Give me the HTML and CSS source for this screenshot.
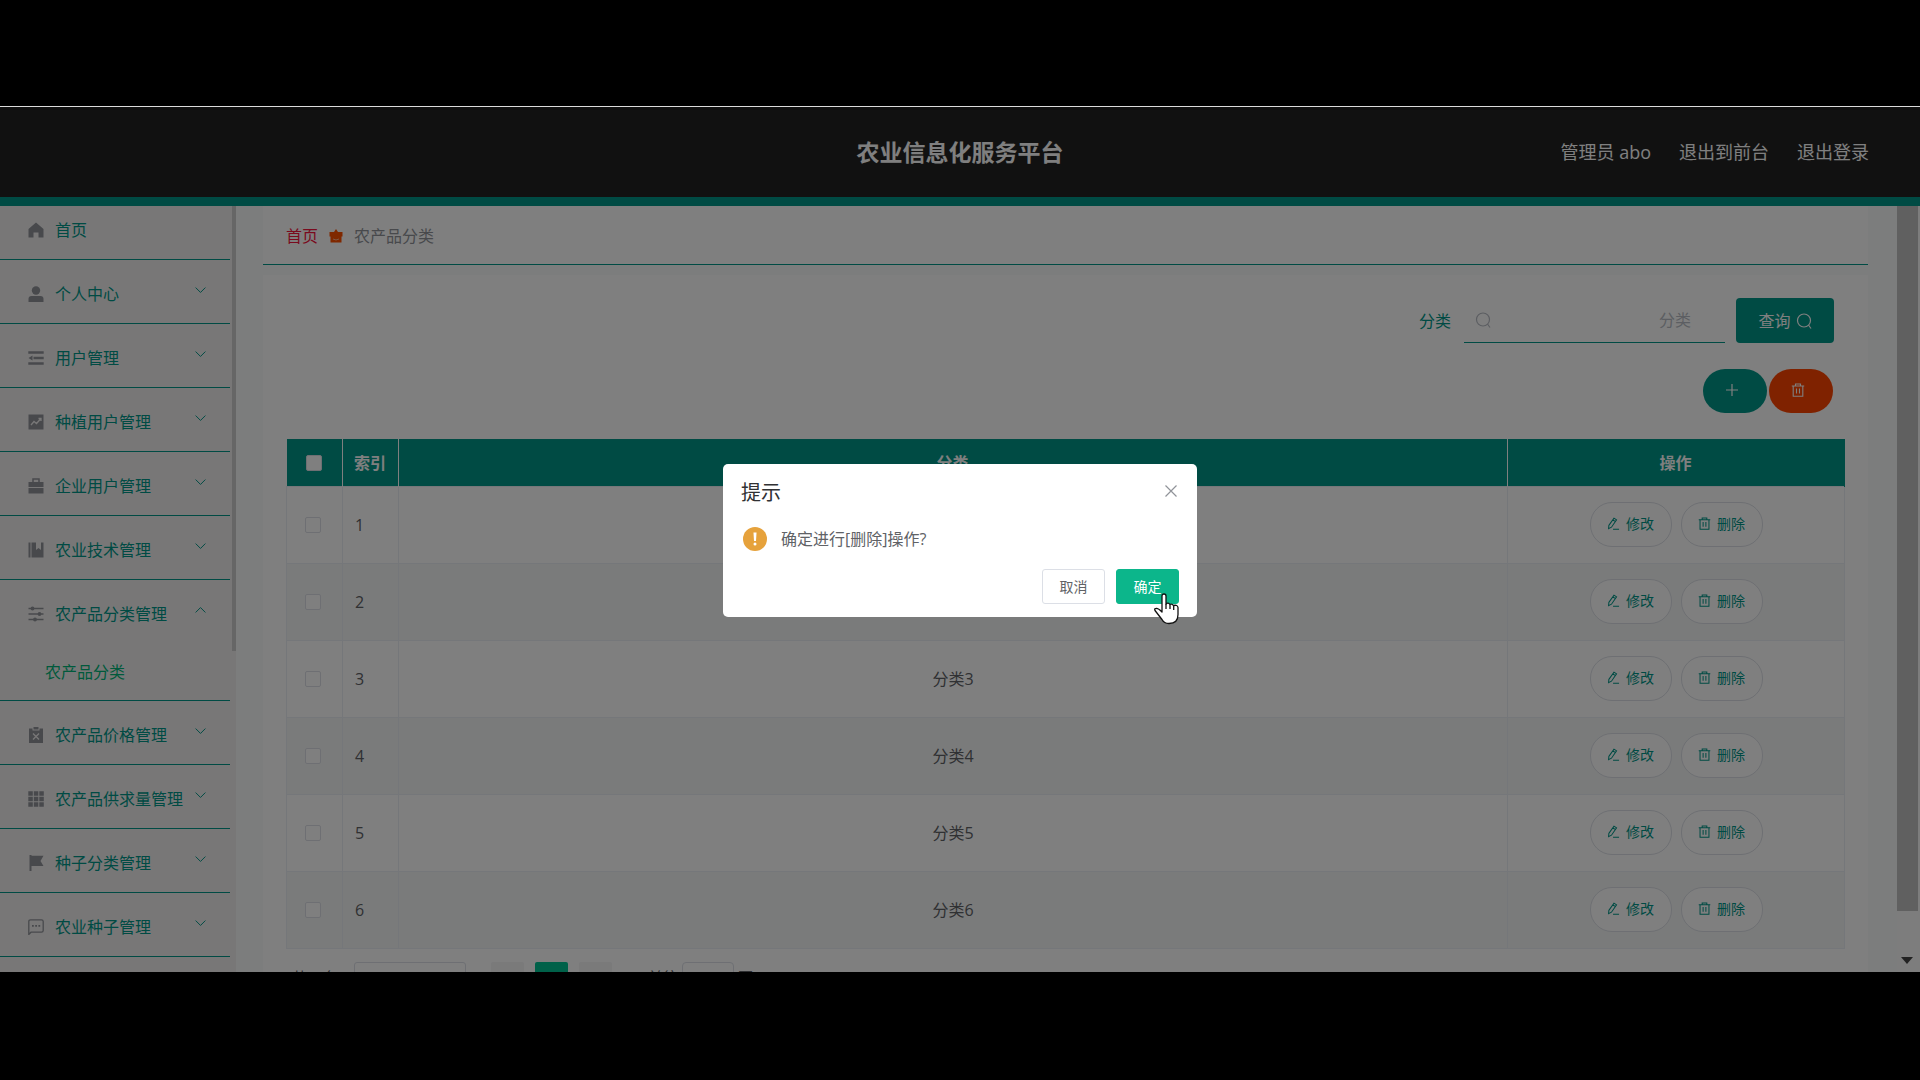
FILE: index.html
```html
<!DOCTYPE html>
<html lang="zh-CN">
<head>
<meta charset="utf-8">
<title>农业信息化服务平台</title>
<link rel="stylesheet" href="styles.css">
</head>
<body>
<svg class="sprite" aria-hidden="true">
  <symbol id="i-down" viewBox="0 0 16 16"><path d="M2 5 8 11 14 5" fill="none" stroke="currentColor" stroke-width="1.200"/></symbol>
  <symbol id="i-home" viewBox="0 0 16 16"><path d="M8 .5 15.500 7v8.500h-5v-5h-5v5h-5V7z"/></symbol>
  <symbol id="i-user" viewBox="0 0 16 16"><circle cx="8" cy="4.500" r="4.200"/><path d="M.5 16v-3q0-3 3-3h9q3 0 3 3v3z"/></symbol>
  <symbol id="i-fold" viewBox="0 0 16 16"><path d="M.3 1.200h15.400v2.600H.3zM5.500 6.700h10.200v2.600H5.500zM.3 12.200h15.400v2.600H.3zM.5 8 4.500 5.500v5z"/></symbol>
  <symbol id="i-chart" viewBox="0 0 16 16"><path d="M.5.5h15v15H.5z"/><path d="m3 11 3-3.500 2.500 2 4-4.500M10.500 4.500h2.500V7" fill="none" stroke="#f0efef" stroke-width="1.300"/></symbol>
  <symbol id="i-case" viewBox="0 0 16 16"><path d="M5 4V1h6v3" fill="none" stroke="currentColor" stroke-width="1.500"/><path d="M.5 4h15v5H.5zM.5 10h15v5.500H.5z"/></symbol>
  <symbol id="i-book" viewBox="0 0 16 16"><path d="M.5.5h2v15h-2zM3.500.5H8V8l2.500-2L13 8V.5h2.500v15h-12z"/></symbol>
  <symbol id="i-sliders" viewBox="0 0 16 16"><path d="M.5 2.500h15M.5 8h15M.5 13.500h15" stroke="currentColor" stroke-width="1.300"/><circle cx="4.500" cy="2.500" r="1.900"/><circle cx="11.500" cy="8" r="1.900"/><circle cx="7" cy="13.500" r="1.900"/></symbol>
  <symbol id="i-clip" viewBox="0 0 16 16"><path d="M1 1.500h3.500v2h7v-2H15V16H1zM5.500 0h5v2.500h-5z"/><path d="m5 6.500 6 6m0-6-6 6" stroke="#f0efef" stroke-width="1.300"/></symbol>
  <symbol id="i-grid" viewBox="0 0 16 16"><path d="M.3.3h4.500v4.500H.3zM5.800.3h4.500v4.500H5.800zM11.300.3h4.500v4.500h-4.500zM.3 5.800h4.500v4.500H.3zM5.800 5.800h4.500v4.500H5.800zM11.300 5.800h4.500v4.500h-4.500zM.3 11.300h4.500v4.500H.3zM5.800 11.300h4.500v4.500H5.800zM11.300 11.300h4.500v4.500h-4.500z"/></symbol>
  <symbol id="i-flag" viewBox="0 0 16 16"><path d="M1.500 0h2v.8h12L12.500 6l3 5h-12v5h-2z"/></symbol>
  <symbol id="i-chat" viewBox="0 0 16 16"><path d="M.8 15.500V2.500Q.8.8 2.500.8h11q1.700 0 1.700 1.700v9q0 1.700-1.700 1.700H3z" fill="none" stroke="currentColor" stroke-width="1.300"/><path d="M4 6h1.800v1.800H4zM7.200 6H9v1.800H7.200zM10.400 6h1.800v1.800h-1.800z"/></symbol>
  <symbol id="i-search" viewBox="0 0 16 16"><circle cx="8" cy="7.500" r="6.500" fill="none" stroke="currentColor" stroke-width="1.200"/><path d="m12.500 12 2.500 3.500" stroke="currentColor" stroke-width="1.200"/></symbol>
  <symbol id="i-plus" viewBox="0 0 14 14"><path d="M7 1v12M1 7h12" stroke="currentColor" stroke-width="1.200"/></symbol>
  <symbol id="i-trash" viewBox="0 0 14 14"><path d="M.8 3h12.400M4.500 3V1h5v2M2.200 3v10.200h9.600V3M5.500 5.500v5M8.500 5.500v5" fill="none" stroke="currentColor" stroke-width="1.100"/></symbol>
  <symbol id="i-edit" viewBox="0 0 14 14"><path d="M2 9 7.500 1.200 10.300 3.100 4.800 11 1.700 12.500zM6.200 3l2.800 1.900M6.500 13.200H13" fill="none" stroke="currentColor" stroke-width="1.100"/></symbol>
  <symbol id="i-close" viewBox="0 0 14 14"><path d="m1.500 1.500 11 11m0-11-11 11" stroke="currentColor" stroke-width="1.200"/></symbol>
</svg>

<div class="screen">
  <header class="topbar">
    <h1 class="title">农业信息化服务平台</h1>
    <nav class="account">
      <span>管理员 abo</span>
      <a href="#">退出到前台</a>
      <a href="#">退出登录</a>
    </nav>
  </header>

  <div class="body">
    <aside class="sidebar">
      <ul class="menu">
        <li><a class="item" href="#"><svg class="icon"><use href="#i-home"/></svg><span>首页</span></a></li>
        <li><a class="item" href="#"><svg class="icon"><use href="#i-user"/></svg><span>个人中心</span><svg class="arrow"><use href="#i-down"/></svg></a></li>
        <li><a class="item" href="#"><svg class="icon"><use href="#i-fold"/></svg><span>用户管理</span><svg class="arrow"><use href="#i-down"/></svg></a></li>
        <li><a class="item" href="#"><svg class="icon"><use href="#i-chart"/></svg><span>种植用户管理</span><svg class="arrow"><use href="#i-down"/></svg></a></li>
        <li><a class="item" href="#"><svg class="icon"><use href="#i-case"/></svg><span>企业用户管理</span><svg class="arrow"><use href="#i-down"/></svg></a></li>
        <li><a class="item" href="#"><svg class="icon"><use href="#i-book"/></svg><span>农业技术管理</span><svg class="arrow"><use href="#i-down"/></svg></a></li>
        <li>
          <a class="item" href="#"><svg class="icon"><use href="#i-sliders"/></svg><span>农产品分类管理</span><svg class="arrow arrow-up"><use href="#i-down"/></svg></a>
          <a class="subitem" href="#">农产品分类</a>
        </li>
        <li><a class="item" href="#"><svg class="icon"><use href="#i-clip"/></svg><span>农产品价格管理</span><svg class="arrow"><use href="#i-down"/></svg></a></li>
        <li><a class="item" href="#"><svg class="icon"><use href="#i-grid"/></svg><span>农产品供求量管理</span><svg class="arrow"><use href="#i-down"/></svg></a></li>
        <li><a class="item" href="#"><svg class="icon"><use href="#i-flag"/></svg><span>种子分类管理</span><svg class="arrow"><use href="#i-down"/></svg></a></li>
        <li><a class="item" href="#"><svg class="icon"><use href="#i-chat"/></svg><span>农业种子管理</span><svg class="arrow"><use href="#i-down"/></svg></a></li>
      </ul>
      <div class="side-thumb"></div>
    </aside>

    <main class="main">
      <nav class="crumbs">
        <a href="#">首页</a>
        <svg class="crumb-icon" viewBox="0 0 14 14"><path d="M7 0 9 3h4.500v4.500H12.500V13.500H1.500V7.500H.5V3H5z" fill="#ff5000"/><path d="M4 10q3 2 6 0" fill="none" stroke="#ffb08a"/></svg>
        <span>农产品分类</span>
      </nav>

      <section class="panel">
        <form class="search">
          <label for="kind">分类</label>
          <div class="field"><svg class="icon"><use href="#i-search"/></svg><input id="kind" type="text" placeholder="分类"></div>
          <button class="query" type="button">查询<svg class="icon"><use href="#i-search"/></svg></button>
        </form>
        <div class="tools">
          <button class="pill add" type="button" aria-label="新增"><svg class="glyph"><use href="#i-plus"/></svg></button>
          <button class="pill remove" type="button" aria-label="删除"><svg class="glyph"><use href="#i-trash"/></svg></button>
        </div>

        <table class="grid">
          <colgroup><col class="c-check"><col class="c-index"><col><col class="c-ops"></colgroup>
          <thead>
            <tr><th><input type="checkbox" aria-label="全选"></th><th>索引</th><th>分类</th><th>操作</th></tr>
          </thead>
          <tbody>
            <tr><td><input type="checkbox" aria-label="选择1"></td><td>1</td><td>分类1</td><td><div class="ops"><button type="button"><svg class="glyph"><use href="#i-edit"/></svg>修改</button><button type="button"><svg class="glyph"><use href="#i-trash"/></svg>删除</button></div></td></tr>
            <tr><td><input type="checkbox" aria-label="选择2"></td><td>2</td><td>分类2</td><td><div class="ops"><button type="button"><svg class="glyph"><use href="#i-edit"/></svg>修改</button><button type="button"><svg class="glyph"><use href="#i-trash"/></svg>删除</button></div></td></tr>
            <tr><td><input type="checkbox" aria-label="选择3"></td><td>3</td><td>分类3</td><td><div class="ops"><button type="button"><svg class="glyph"><use href="#i-edit"/></svg>修改</button><button type="button"><svg class="glyph"><use href="#i-trash"/></svg>删除</button></div></td></tr>
            <tr><td><input type="checkbox" aria-label="选择4"></td><td>4</td><td>分类4</td><td><div class="ops"><button type="button"><svg class="glyph"><use href="#i-edit"/></svg>修改</button><button type="button"><svg class="glyph"><use href="#i-trash"/></svg>删除</button></div></td></tr>
            <tr><td><input type="checkbox" aria-label="选择5"></td><td>5</td><td>分类5</td><td><div class="ops"><button type="button"><svg class="glyph"><use href="#i-edit"/></svg>修改</button><button type="button"><svg class="glyph"><use href="#i-trash"/></svg>删除</button></div></td></tr>
            <tr><td><input type="checkbox" aria-label="选择6"></td><td>6</td><td>分类6</td><td><div class="ops"><button type="button"><svg class="glyph"><use href="#i-edit"/></svg>修改</button><button type="button"><svg class="glyph"><use href="#i-trash"/></svg>删除</button></div></td></tr>
          </tbody>
        </table>

        <div class="pager">
          <span class="total">共 6 条</span>
          <select class="size" aria-label="每页条数"><option>10条/页</option></select>
          <div class="pages">
            <button type="button" aria-label="上一页"></button>
            <button class="current" type="button">1</button>
            <button type="button" aria-label="下一页"></button>
          </div>
          <label class="jump">前往<input type="text" value="1">页</label>
        </div>
      </section>
    </main>

    <div class="scrollbar"><div class="thumb"></div><svg class="scroll-down" viewBox="0 0 12 7"><path d="M0 0h12L6 7z"/></svg></div>
  </div>

  <div class="mask">
    <div class="dialog" role="dialog" aria-labelledby="dialog-title">
      <div class="dialog-head">
        <h2 id="dialog-title">提示</h2>
        <button class="close" type="button" aria-label="关闭"><svg class="glyph"><use href="#i-close"/></svg></button>
      </div>
      <div class="dialog-body">
        <svg class="warn" viewBox="0 0 24 24"><circle cx="12" cy="12" r="12" fill="#e6a23c"/><path d="M10.500 5.500h3L13 14h-2z" fill="#fff"/><circle cx="12" cy="17" r="1.500" fill="#fff"/></svg>
        <p>确定进行[删除]操作?</p>
      </div>
      <div class="dialog-foot">
        <button class="cancel" type="button">取消</button>
        <button class="confirm" type="button">确定</button>
      </div>
      <svg class="cursor" viewBox="0 0 26 32"><path d="M9 19V3q0-2 2-2t2 2v8q2-2 4 .5 2-1 3.500 1 4-1 4.500 2v7q0 9-9 9-5 0-7-4l-7-9q-1-2 1-2 2-.5 6 3.500z" fill="#fff" stroke="#111" stroke-width="1.300" stroke-linejoin="round"/><path d="M13 11v5M17 12v4M20.700 13v4" stroke="#111" stroke-width="1.300"/></svg>
    </div>
  </div>
</div>
</body>
</html>
```
FILE: styles.css
```css
* { box-sizing: border-box; }

body {
  margin: 0;
  background: #000;
  color: #606266;
  font: 16px/24px "Open Sans", "Noto Sans CJK SC", sans-serif;
}

a { color: inherit; text-decoration: none; }
h1, h2, p, ul { margin: 0; padding: 0; }
ul { list-style: none; }
button, input, select { font: inherit; color: inherit; }
svg { fill: currentColor; flex: none; }

.sprite { display: none; }
.icon { width: 16px; height: 16px; }
.glyph { width: 14px; height: 14px; }

.screen {
  position: relative;
  display: flex;
  flex-direction: column;
  height: calc(100vh - 214px);
  margin: 106px 0 108px;
  border-top: 1px solid #dcdcdc;
  overflow: hidden;
}

/* top bar */
.topbar {
  display: grid;
  grid-template-columns: 1fr auto 1fr;
  align-items: center;
  flex: none;
  height: 99px;
  padding: 0 51px;
  background: #222;
  border-bottom: 9px solid #009688;
  color: #fff;
}
.title { grid-column: 2; font-size: 23px; line-height: 32px; }
.account { display: flex; justify-content: flex-end; gap: 28px; font-size: 18px; }

.body { display: flex; flex: 1; min-height: 0; background: #f8fafa; }

/* sidebar */
.sidebar {
  display: flex;
  justify-content: space-between;
  flex: none;
  width: 236px;
  overflow: hidden;
  background: #f0efef;
  color: #009688;
}
.menu { width: 230px; margin-top: -10px; }
.menu li { border-bottom: 1px solid #009688; }
.item {
  display: flex;
  align-items: center;
  gap: 11px;
  height: 63px;
  padding: 4px 23px 0 28px;
  white-space: nowrap;
}
.item .icon { color: #909399; }
.arrow { width: 13px; height: 16px; margin: 0 0 8px auto; }
.arrow-up { transform: rotate(180deg); }
.subitem { display: block; height: 57px; padding: 17px 0 0 45px; color: #00b478; }
.side-thumb { width: 4px; height: 445px; background: #ccc; }

/* content */
.main {
  display: flex;
  flex-direction: column;
  flex: 1;
  min-width: 0;
  gap: 10px;
  padding: 0 29px 0 27px;
  overflow: hidden;
}
.crumbs {
  display: flex;
  align-items: center;
  gap: 11px;
  flex: none;
  height: 59px;
  padding: 2px 23px 0;
  background: #fff;
  border-bottom: 1px solid #009688;
  color: #909399;
}
.crumbs a { color: #f5143c; }
.crumb-icon { width: 14px; height: 14px; }

.panel { flex: 1 0 auto; padding: 23px; background: #fff; }

.search { display: flex; justify-content: flex-end; align-items: center; margin-right: 11px; }
.search label { margin-right: 13px; color: #009688; }
.field {
  display: flex;
  align-items: center;
  width: 261px;
  height: 45px;
  margin-right: 11px;
  padding: 0 32px 0 11px;
  border-bottom: 1px solid #009688;
  color: #b8bcc4;
}
.field input { flex: 1; min-width: 0; border: 0; outline: 0; background: none; text-align: right; }
.field input::placeholder { color: #b8bcc4; opacity: 1; }
.query {
  display: flex;
  justify-content: center;
  align-items: center;
  gap: 5px;
  width: 98px;
  height: 45px;
  border: 0;
  border-radius: 4px;
  background: #009688;
  color: #fff;
}

.tools { display: flex; justify-content: flex-end; gap: 2px; margin: 26px 12px 26px 0; }
.pill {
  display: flex;
  justify-content: center;
  align-items: center;
  width: 64px;
  height: 44px;
  padding: 0 6px 2px 0;
  border: 0;
  border-radius: 22px;
  color: #fff;
}
.add { background: #009688; }
.remove { background: #ff4500; }

/* table */
.grid { width: 100%; border-collapse: collapse; table-layout: fixed; }
.c-check, .c-index { width: 56px; }
.c-ops { width: 337px; }
.grid th { height: 47px; padding: 2px 1px 0 0; background: #009688; color: #fff; border-right: 1px solid #fff; }
.grid th:last-child { border-right-color: #009688; }
.grid td { height: 77px; padding: 0; border: 1px solid #ebeef5; text-align: center; }
.grid td:first-child { padding-right: 3px; }
.grid td:nth-child(2) { padding-left: 12px; text-align: left; }
.grid tbody tr:nth-child(even) { background: #f5f7f7; }
.grid input {
  appearance: none;
  display: block;
  width: 16px;
  height: 16px;
  margin: 0 auto;
  border: 1px solid #dcdfe6;
  border-radius: 2px;
  background: #fff;
}
.ops { display: flex; justify-content: center; gap: 9px; }
.ops button {
  display: flex;
  justify-content: center;
  align-items: center;
  gap: 6px;
  width: 82px;
  height: 45px;
  padding: 0 0 2px;
  border: 1px solid #dcdfe6;
  border-radius: 22px;
  background: #fff;
  color: #009688;
  font-size: 14px;
}
.ops .glyph { width: 13px; height: 13px; }

/* pagination */
.pager { display: flex; align-items: center; margin-top: 13px; padding-left: 6px; font-size: 15px; }
.total { width: 62px; padding-bottom: 2px; }
.size { width: 112px; height: 32px; padding: 4px 12px 0; border: 1px solid #dcdfe6; border-radius: 3px; background: #fff; }
.pages { display: flex; gap: 11px; margin: 0 36px 0 25px; }
.pages button { width: 33px; height: 32px; padding: 0; border: 0; border-radius: 2px; background: #f4f4f5; }
.pages .current { background: #00c292; color: #fff; }
.jump { display: flex; align-items: center; gap: 4px; padding-bottom: 2px; }
.jump input { width: 52px; height: 30px; border: 1px solid #dcdfe6; border-radius: 4px; text-align: center; }

/* page scrollbar */
.scrollbar {
  display: flex;
  flex-direction: column;
  justify-content: space-between;
  flex: none;
  width: 23px;
  padding-bottom: 8px;
  background: #fafafa;
}
.thumb { width: 21px; height: 705px; background: #c1c1c1; }
.scroll-down { width: 12px; height: 7px; margin-left: 4px; color: #444; }

/* confirm dialog */
.mask {
  position: absolute;
  inset: 0;
  display: flex;
  justify-content: center;
  align-items: center;
  padding-top: 2px;
  background: rgba(0, 0, 0, .5);
}
.dialog {
  position: relative;
  width: 474px;
  padding: 17px 18px 13px;
  border-radius: 5px;
  background: #fff;
}
.dialog-head { display: flex; justify-content: space-between; align-items: flex-start; color: #303133; }
.dialog-head h2 { font-size: 20px; line-height: 24px; font-weight: 400; }
.close { display: flex; padding: 3px 1px; border: 0; background: none; color: #909399; }
.dialog-body { display: flex; align-items: center; gap: 14px; padding: 22px 2px 18px; }
.warn { width: 24px; height: 24px; }
.dialog-foot { display: flex; justify-content: flex-end; gap: 11px; }
.dialog-foot button { width: 63px; height: 35px; padding: 0; border: 1px solid #dcdfe6; border-radius: 3px; background: #fff; font-size: 14px; }
.dialog-foot .confirm { border-color: #0cb68b; background: #0cb68b; color: #fff; }
.cursor { position: absolute; right: 18px; bottom: -8px; width: 26px; height: 32px; }
```
